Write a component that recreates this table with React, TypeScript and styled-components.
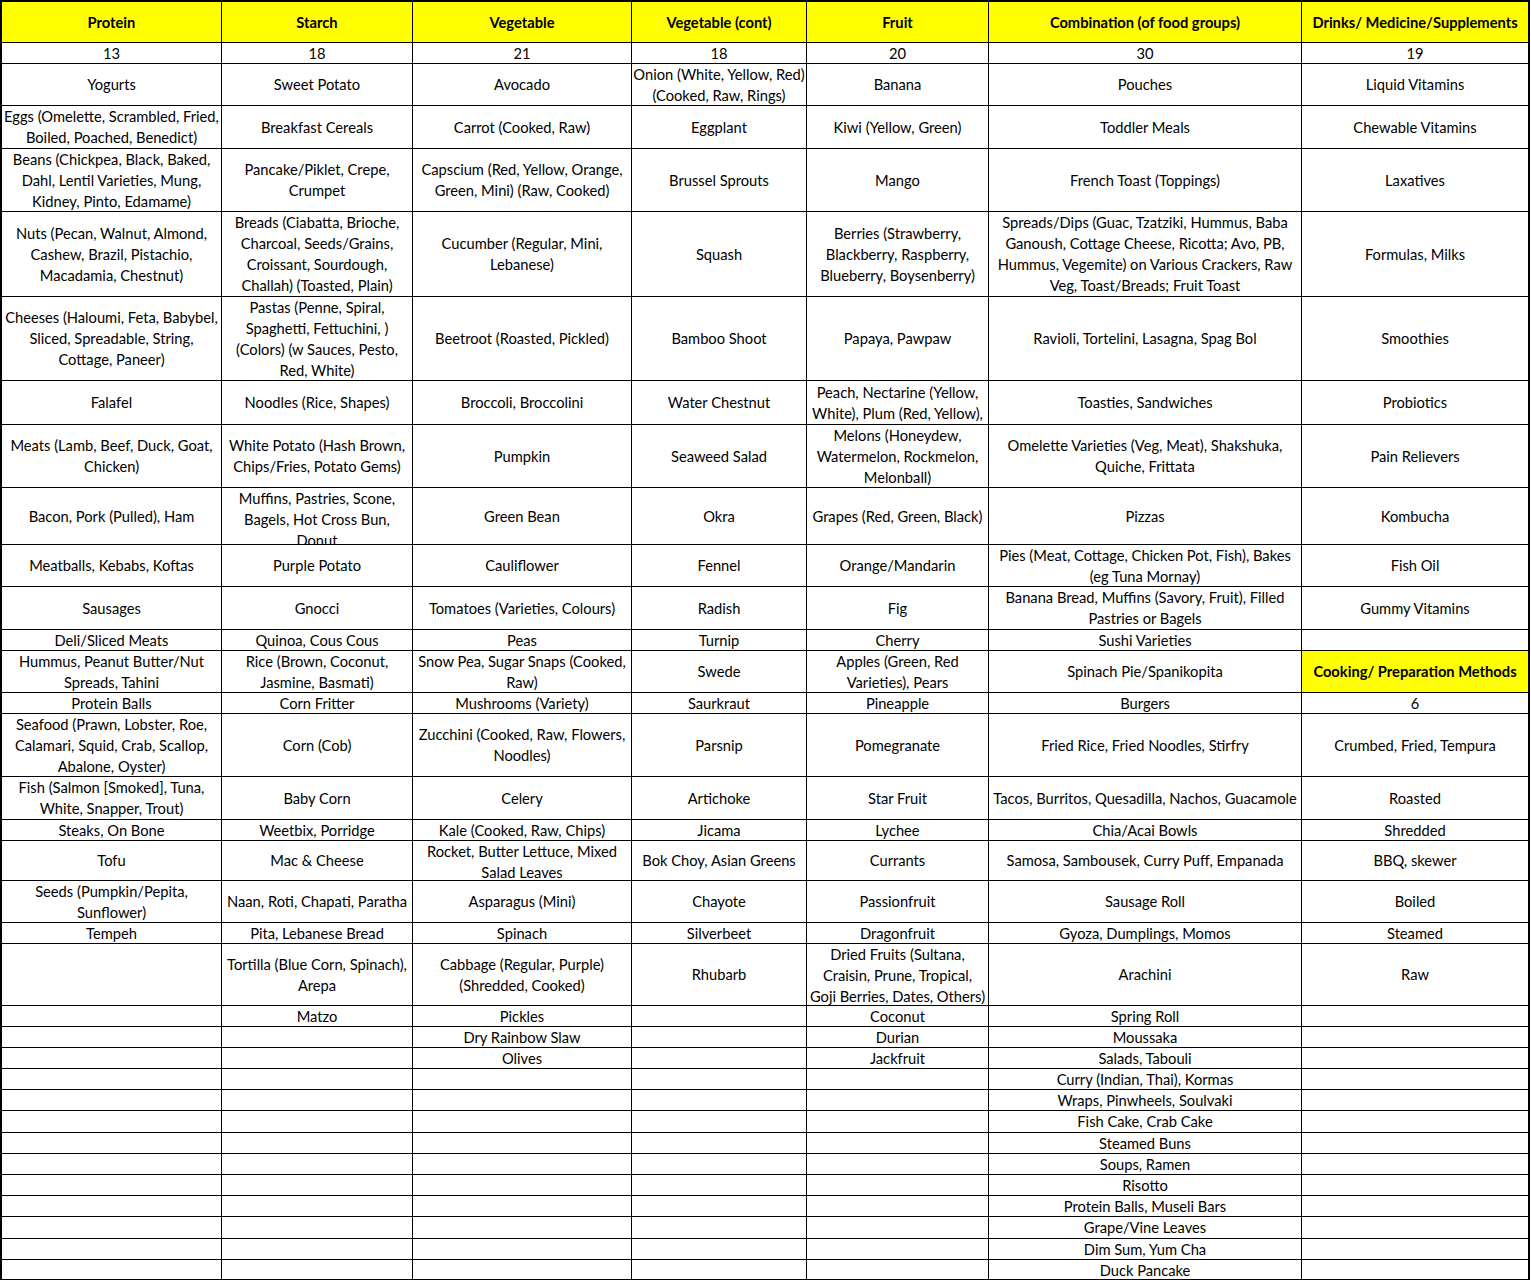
import styled, { createGlobalStyle } from "styled-components";

const GlobalStyle = createGlobalStyle`
  html, body {
    margin: 0;
    padding: 0;
    background: #ffffff;
  }
  body {
    font-family: "Lato", "Liberation Sans", sans-serif;
  }
`;

const COLS = [219, 190, 218, 174, 181, 312, 226];
const ROW_HEIGHTS = [
  40, 20, 41, 42, 62, 84, 83, 43, 62, 56, 41, 42, 20, 41, 20, 62, 42, 20, 39,
  41, 20, 61, 20, 20, 20, 20, 20, 21, 20, 20, 20, 20, 21, 20, 19,
];

const Sheet = styled.div<{ $cols: string; $rows: string }>`
  display: grid;
  grid-template-columns: ${(p) => p.$cols};
  grid-template-rows: ${(p) => p.$rows};
  gap: 1px;
  background: #000000;
  border: 2px solid #000000;
  width: max-content;
`;

const Cell = styled.div<{ $head?: boolean }>`
  display: flex;
  align-items: safe center;
  justify-content: center;
  overflow: hidden;
  background: ${(p) => (p.$head ? "#ffff00" : "#ffffff")};
  color: #000000;
  font-size: 14.7px;
  font-weight: ${(p) => (p.$head ? 700 : 400)};
  line-height: 21px;
  text-align: center;
  white-space: pre;
`;

const H = "#head";

const rows: string[][] = [
  [H + "Protein", H + "Starch", H + "Vegetable", H + "Vegetable (cont)", H + "Fruit", H + "Combination (of food groups)", H + "Drinks/ Medicine/Supplements"],
  ["13", "18", "21", "18", "20", "30", "19"],
  ["Yogurts", "Sweet Potato", "Avocado", "Onion (White, Yellow, Red)\n(Cooked, Raw, Rings)", "Banana", "Pouches", "Liquid Vitamins"],
  ["Eggs (Omelette, Scrambled, Fried,\nBoiled, Poached, Benedict)", "Breakfast Cereals", "Carrot (Cooked, Raw)", "Eggplant", "Kiwi (Yellow, Green)", "Toddler Meals", "Chewable Vitamins"],
  ["Beans (Chickpea, Black, Baked,\nDahl, Lentil Varieties, Mung,\nKidney, Pinto, Edamame)", "Pancake/Piklet, Crepe,\nCrumpet", "Capscium (Red, Yellow, Orange,\nGreen, Mini) (Raw, Cooked)", "Brussel Sprouts", "Mango", "French Toast (Toppings)", "Laxatives"],
  ["Nuts (Pecan, Walnut, Almond,\nCashew, Brazil, Pistachio,\nMacadamia, Chestnut)", "Breads (Ciabatta, Brioche,\nCharcoal, Seeds/Grains,\nCroissant, Sourdough,\nChallah) (Toasted, Plain)", "Cucumber (Regular, Mini,\nLebanese)", "Squash", "Berries (Strawberry,\nBlackberry, Raspberry,\nBlueberry, Boysenberry)", "Spreads/Dips (Guac, Tzatziki, Hummus, Baba\nGanoush, Cottage Cheese, Ricotta; Avo, PB,\nHummus, Vegemite) on Various Crackers, Raw\nVeg, Toast/Breads; Fruit Toast", "Formulas, Milks"],
  ["Cheeses (Haloumi, Feta, Babybel,\nSliced, Spreadable, String,\nCottage, Paneer)", "Pastas (Penne, Spiral,\nSpaghetti, Fettuchini, )\n(Colors) (w Sauces, Pesto,\nRed, White)", "Beetroot (Roasted, Pickled)", "Bamboo Shoot", "Papaya, Pawpaw", "Ravioli, Tortelini, Lasagna, Spag Bol", "Smoothies"],
  ["Falafel", "Noodles (Rice, Shapes)", "Broccoli, Broccolini", "Water Chestnut", "Peach, Nectarine (Yellow,\nWhite), Plum (Red, Yellow),", "Toasties, Sandwiches", "Probiotics"],
  ["Meats (Lamb, Beef, Duck, Goat,\nChicken)", "White Potato (Hash Brown,\nChips/Fries, Potato Gems)", "Pumpkin", "Seaweed Salad", "Melons (Honeydew,\nWatermelon, Rockmelon,\nMelonball)", "Omelette Varieties (Veg, Meat), Shakshuka,\nQuiche, Frittata", "Pain Relievers"],
  ["Bacon, Pork (Pulled), Ham", "Muffins, Pastries, Scone,\nBagels, Hot Cross Bun,\nDonut", "Green Bean", "Okra", "Grapes (Red, Green, Black)", "Pizzas", "Kombucha"],
  ["Meatballs, Kebabs, Koftas", "Purple Potato", "Cauliflower", "Fennel", "Orange/Mandarin", "Pies (Meat, Cottage, Chicken Pot, Fish), Bakes\n(eg Tuna Mornay)", "Fish Oil"],
  ["Sausages", "Gnocci", "Tomatoes (Varieties, Colours)", "Radish", "Fig", "Banana Bread, Muffins (Savory, Fruit), Filled\nPastries or Bagels", "Gummy Vitamins"],
  ["Deli/Sliced Meats", "Quinoa, Cous Cous", "Peas", "Turnip", "Cherry", "Sushi Varieties", ""],
  ["Hummus, Peanut Butter/Nut\nSpreads, Tahini", "Rice (Brown, Coconut,\nJasmine, Basmati)", "Snow Pea, Sugar Snaps (Cooked,\nRaw)", "Swede", "Apples (Green, Red\nVarieties), Pears", "Spinach Pie/Spanikopita", H + "Cooking/ Preparation Methods"],
  ["Protein Balls", "Corn Fritter", "Mushrooms (Variety)", "Saurkraut", "Pineapple", "Burgers", "6"],
  ["Seafood (Prawn, Lobster, Roe,\nCalamari, Squid, Crab, Scallop,\nAbalone, Oyster)", "Corn (Cob)", "Zucchini (Cooked, Raw, Flowers,\nNoodles)", "Parsnip", "Pomegranate", "Fried Rice, Fried Noodles, Stirfry", "Crumbed, Fried, Tempura"],
  ["Fish (Salmon [Smoked], Tuna,\nWhite, Snapper, Trout)", "Baby Corn", "Celery", "Artichoke", "Star Fruit", "Tacos, Burritos, Quesadilla, Nachos, Guacamole", "Roasted"],
  ["Steaks, On Bone", "Weetbix, Porridge", "Kale (Cooked, Raw, Chips)", "Jicama", "Lychee", "Chia/Acai Bowls", "Shredded"],
  ["Tofu", "Mac & Cheese", "Rocket, Butter Lettuce, Mixed\nSalad Leaves", "Bok Choy, Asian Greens", "Currants", "Samosa, Sambousek, Curry Puff, Empanada", "BBQ, skewer"],
  ["Seeds (Pumpkin/Pepita,\nSunflower)", "Naan, Roti, Chapati, Paratha", "Asparagus (Mini)", "Chayote", "Passionfruit", "Sausage Roll", "Boiled"],
  ["Tempeh", "Pita, Lebanese Bread", "Spinach", "Silverbeet", "Dragonfruit", "Gyoza, Dumplings, Momos", "Steamed"],
  ["", "Tortilla (Blue Corn, Spinach),\nArepa", "Cabbage (Regular, Purple)\n(Shredded, Cooked)", "Rhubarb", "Dried Fruits (Sultana,\nCraisin, Prune, Tropical,\nGoji Berries, Dates, Others)", "Arachini", "Raw"],
  ["", "Matzo", "Pickles", "", "Coconut", "Spring Roll", ""],
  ["", "", "Dry Rainbow Slaw", "", "Durian", "Moussaka", ""],
  ["", "", "Olives", "", "Jackfruit", "Salads, Tabouli", ""],
  ["", "", "", "", "", "Curry (Indian, Thai), Kormas", ""],
  ["", "", "", "", "", "Wraps, Pinwheels, Soulvaki", ""],
  ["", "", "", "", "", "Fish Cake, Crab Cake", ""],
  ["", "", "", "", "", "Steamed Buns", ""],
  ["", "", "", "", "", "Soups, Ramen", ""],
  ["", "", "", "", "", "Risotto", ""],
  ["", "", "", "", "", "Protein Balls, Museli Bars", ""],
  ["", "", "", "", "", "Grape/Vine Leaves", ""],
  ["", "", "", "", "", "Dim Sum, Yum Cha", ""],
  ["", "", "", "", "", "Duck Pancake", ""],
];

export default function App() {
  return (
    <>
      <GlobalStyle />
      <Sheet
        $cols={COLS.map((c) => c + "px").join(" ")}
        $rows={ROW_HEIGHTS.map((h) => h + "px").join(" ")}
      >
        {rows.map((row, r) =>
          row.map((text, c) => {
            const head = text.startsWith(H);
            return (
              <Cell key={r + "-" + c} $head={head}>
                {head ? text.slice(H.length) : text}
              </Cell>
            );
          })
        )}
      </Sheet>
    </>
  );
}
